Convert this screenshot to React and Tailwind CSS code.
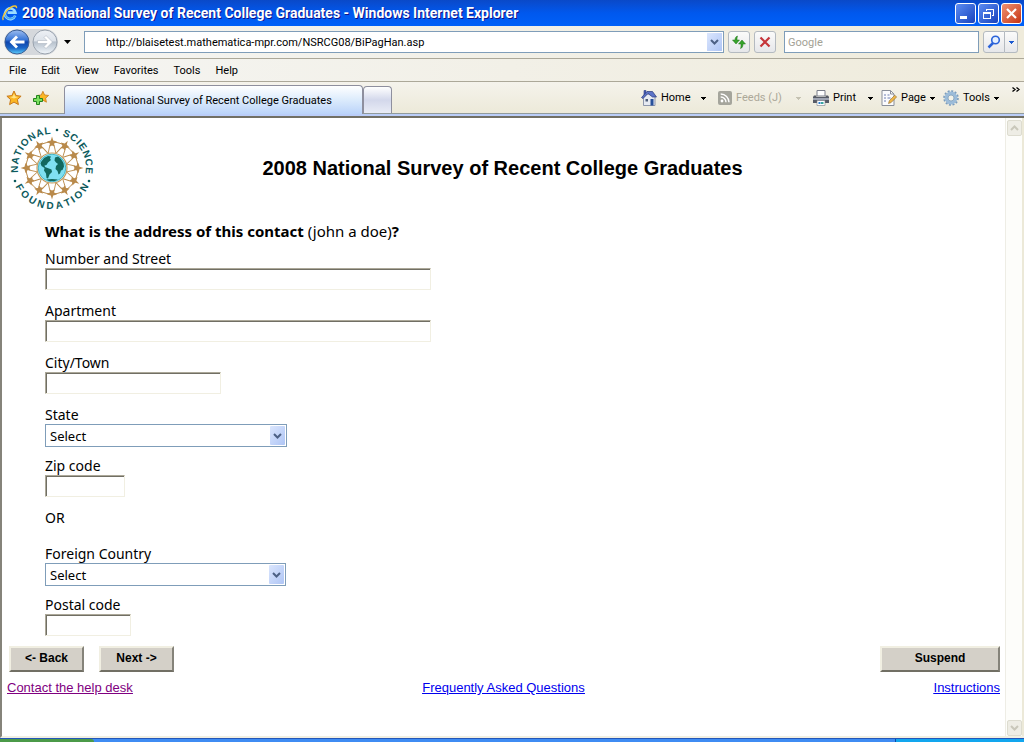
import React from 'react';

const PAGE_TITLE = '2008 National Survey of Recent College Graduates';
const MENU_ITEMS = ['File', 'Edit', 'View', 'Favorites', 'Tools', 'Help'];

const DropArrow = ({ className = 'fill-black' }) => (
    <svg className={`w-[5px] h-[3px] shrink-0 ${className}`} viewBox="0 0 5 3" shapeRendering="crispEdges">
        <path d="M0 0h5v1H4v1H3v1H2V2H1V1H0z" />
    </svg>
);

const Chevron = ({ className = 'stroke-[#4d6185]' }) => (
    <svg className={`w-[9px] h-[6px] ${className}`} viewBox="0 0 9 6" fill="none" strokeWidth="2">
        <path d="M1 1l3.5 3.5L8 1" />
    </svg>
);

const IeIcon = () => (
    <svg className="w-4 h-4 shrink-0" viewBox="0 0 16 16" fill="none">
        <path d="M13.2 10.6A5.3 5.3 0 1 1 13.4 7.6H5.6" stroke="#9bdcff" strokeWidth="2.6" />
        <path d="M13 10.8A5.2 5.2 0 0 1 3.2 9.6" stroke="#4aa9ee" strokeWidth="1.4" />
        <path d="M1.4 15C-.6 12.6 3.6 5.4 9 2.2c3.4-2 6-1.6 5.4 1" stroke="#f4c430" strokeWidth="1.4" />
    </svg>
);

const BackIcon = () => (
    <svg className="w-[26px] h-[26px]" viewBox="0 0 26 26">
        <defs>
            <linearGradient id="backOrb" x1="0" y1="0" x2="0" y2="1">
                <stop offset="0" stopColor="#9dbdf0" />
                <stop offset="0.4" stopColor="#3b78d8" />
                <stop offset="0.5" stopColor="#0f45ad" />
                <stop offset="0.75" stopColor="#1a66c8" />
                <stop offset="1" stopColor="#5fd0fb" />
            </linearGradient>
        </defs>
        <circle cx="13" cy="13" r="12" fill="url(#backOrb)" stroke="#3d5f95" />
        <path d="M5.500 13L12 6.500l2 2-3 3h9.500v3H11l3 3-2 2z" fill="#fff" />
    </svg>
);

const ForwardIcon = () => (
    <svg className="w-[26px] h-[26px]" viewBox="0 0 26 26">
        <defs>
            <linearGradient id="forwardOrb" x1="0" y1="0" x2="0" y2="1">
                <stop offset="0" stopColor="#eef1f5" />
                <stop offset="0.45" stopColor="#dde2e9" />
                <stop offset="0.5" stopColor="#b6c0cc" />
                <stop offset="1" stopColor="#f1f6fb" />
            </linearGradient>
        </defs>
        <circle cx="13" cy="13" r="12" fill="url(#forwardOrb)" stroke="#9aa3ae" />
        <path d="M20.500 13L14 6.500l-2 2 3 3H5.500v3H15l-3 3 2 2z" fill="#fff" stroke="#a5adb8" strokeWidth="0.500" />
    </svg>
);

const STAR = 'M8 1l2.100 4.600 5 .6-3.700 3.400 1 5L8 12.100 3.600 14.600l1-5L.9 6.200l5-.6z';

const FavoritesIcon = () => (
    <svg className="w-4 h-4" viewBox="0 0 16 16">
        <path d={STAR} fill="#fbb724" stroke="#c8791b" />
        <path d="M8 3.500l1.200 3 3 .5L8 8.500 4 7l2.800-.5z" fill="#ffe48a" />
    </svg>
);

const AddFavoriteIcon = () => (
    <svg className="w-4 h-4" viewBox="0 0 16 16">
        <g transform="translate(3.500 .5) scale(.8)">
            <path d={STAR} fill="#fbb724" stroke="#c8791b" />
        </g>
        <path d="M3.500 5.500h3v3h3v3h-3v3h-3v-3h-3v-3h3z" fill="#7be05e" stroke="#23831c" />
    </svg>
);

const RefreshIcon = () => (
    <svg className="w-[14px] h-[14px]" viewBox="0 0 14 14">
        <path d="M5.500 1C3.800 1.500 3 3 3 5H.5L4 9l3.500-4H5c0-1.500 0-2.500.5-4z" fill="#35a32a" stroke="#20751b" strokeWidth="0.500" />
        <path d="M8.500 13.500c1.700-.5 2.500-2 2.500-4.500h2.500L10 5 6.500 9H9c0 2 0 3-.5 4.500z" fill="#35a32a" stroke="#20751b" strokeWidth="0.500" />
    </svg>
);

const StopIcon = () => (
    <svg className="w-3 h-3" viewBox="0 0 12 12" fill="none">
        <path d="M1.500 1.500l9 9M10.500 1.500l-9 9" stroke="#c6353a" strokeWidth="2.200" />
    </svg>
);

const SearchIcon = () => (
    <svg className="w-[14px] h-[14px]" viewBox="0 0 14 14" fill="none">
        <path d="M6 8L1.500 12.500" stroke="#2b63d9" strokeWidth="2.500" />
        <circle cx="8.500" cy="5" r="3.800" fill="#e6f1ff" stroke="#2b63d9" strokeWidth="1.600" />
    </svg>
);

const HomeIcon = () => (
    <svg className="w-4 h-4" viewBox="0 0 16 16">
        <path d="M3 .5h2V4L3 6z" fill="#4c63b5" stroke="#2c3b80" strokeWidth="0.600" />
        <path d="M2.500 7.500L6 4h6l2 3.500v8H2.500z" fill="#e6eaf2" stroke="#76829c" strokeWidth="0.800" />
        <path d="M.5 7.500L6 1.500h5.500l4 5.500h-4L7 3.500 2 8.500z" fill="#5d74c8" stroke="#263779" strokeWidth="0.700" />
        <path d="M9.500 9h3v6.500h-3z" fill="#28519b" />
        <path d="M4.500 9H7v2.500H4.500z" fill="#4c5c78" />
    </svg>
);

const FeedIcon = () => (
    <svg className="w-[14px] h-[14px]" viewBox="0 0 14 14" fill="none">
        <rect width="14" height="14" rx="2" fill="#a5a59c" />
        <circle cx="4" cy="10" r="1.400" fill="#fff" />
        <path d="M2.700 6a5.300 5.300 0 0 1 5.300 5.300M2.700 3a8.300 8.300 0 0 1 8.300 8.300" stroke="#fff" strokeWidth="1.400" />
    </svg>
);

const PrintIcon = () => (
    <svg className="w-4 h-4" viewBox="0 0 16 16">
        <path d="M4 .5h8V6H4z" fill="#fff" stroke="#7b7f8a" />
        <path d="M1 5.500h2.500V7h9V5.500H15l1 1.500v6H0V7z" fill="#565b66" />
        <path d="M0 8h16v2H0z" fill="#9fa5b3" />
        <path d="M4 10.500h8v5H4z" fill="#fff" stroke="#7b7f8a" strokeWidth="0.600" />
        <path d="M5.500 12h2v2h-2z" fill="#2b7fd0" />
        <path d="M8 12h2.500v2H8z" fill="#3aa6a0" />
    </svg>
);

const PageIcon = () => (
    <svg className="w-4 h-4" viewBox="0 0 16 16">
        <path d="M1 .5h8.500L13 4v11.500H1z" fill="#fbfbfd" stroke="#8a8f9a" />
        <path d="M9.500.5V4H13" fill="none" stroke="#8a8f9a" />
        <path d="M3 5h2M6.500 5h2M3 8h2M6.500 8h3M3 11h2" stroke="#6f7fb2" />
        <path d="M7.500 13.500l.8-2.800 5.500-5.500 1.800 1.800-5.500 5.600z" fill="#eeb548" stroke="#8c6a2c" strokeWidth="0.600" />
    </svg>
);

const GearIcon = () => (
    <svg className="w-4 h-4" viewBox="0 0 16 16" fill="none">
        <circle cx="8" cy="8" r="6.800" stroke="#7c9dbd" strokeWidth="2" strokeDasharray="2 1.560" />
        <circle cx="8" cy="8" r="4.700" stroke="#9cbcd9" strokeWidth="3.400" />
        <circle cx="8" cy="8" r="3" fill="#f3f2e8" stroke="#7c9dbd" strokeWidth="0.800" />
    </svg>
);

const COMMANDS = [
    { label: 'Home', icon: HomeIcon, width: 'w-[77px] pr-3' },
    { label: 'Feeds (J)', icon: FeedIcon, width: 'w-[95px] pr-3', disabled: true },
    { label: 'Print', icon: PrintIcon, width: 'w-[68px] pr-2' },
    { label: 'Page', icon: PageIcon, width: 'w-[62px] pr-2' },
    { label: 'Tools', icon: GearIcon, width: 'w-[64px] pr-2' },
];

// Half widths of the seal's letters, as a share of the font size
const HALF_WIDTHS = { I: 0.14, L: 0.305, T: 0.305, F: 0.305, E: 0.333, S: 0.333, O: 0.389 };
const halfWidth = (letter) => HALF_WIDTHS[letter] || 0.361;

// Word set round the seal: angles are clockwise from the top, in degrees
const RingWord = ({ word, from, to, radius }) => {
    const size = 10;
    const centres = [0];
    for (let i = 1; i < word.length; i++) {
        centres.push(centres[i - 1] + halfWidth(word[i - 1]) + halfWidth(word[i]) + 0.15);
    }
    const total = centres[word.length - 1];
    const turn = to < from ? 180 : 0;
    const glyphs = [...word].map((letter, i) => {
        const angle = from + ((to - from) * centres[i]) / total;
        const rad = (angle * Math.PI) / 180;
        const tilt = ((angle + turn) * Math.PI) / 180;
        const half = halfWidth(letter) * size;
        return {
            x: (radius * Math.sin(rad) - half * Math.cos(tilt)).toFixed(1),
            y: (-radius * Math.cos(rad) - half * Math.sin(tilt)).toFixed(1),
            rotate: (angle + turn).toFixed(1),
        };
    });

    return (
        <text
            fontSize={size}
            x={glyphs.map((g) => g.x).join(' ')}
            y={glyphs.map((g) => g.y).join(' ')}
            rotate={glyphs.map((g) => g.rotate).join(' ')}
        >
            {word}
        </text>
    );
};

const FIGURE_ANGLES = [0, 30, 60, 90, 120, 150, 180, 210, 240, 270, 300, 330];

const NsfLogo = () => (
    <svg className="w-[86px] h-[86px] shrink-0" viewBox="-43 -43 86 86" role="img" aria-label="National Science Foundation">
        <circle r="26" fill="none" stroke="#b98a4b" strokeWidth="1" />
        {FIGURE_ANGLES.map((angle) => (
            <g key={angle} transform={`rotate(${angle})`} fill="#b98a4b">
                <path d="M0 -31.500L1.200 -27.500 5 -26.500 2.200 -24.500 2.300 -21.500 0 -22.500-2.300 -21.500-2.200 -24.500-5 -26.500-1.200 -27.500z" />
                <path d="M-2 -23L-3.800 -15M2 -23L3.800 -15" fill="none" stroke="#b98a4b" strokeWidth="0.900" />
            </g>
        ))}
        <circle r="15" fill="#fff" stroke="#c39a5c" strokeWidth="1.200" />
        <circle r="13.800" fill="#7fe0f2" stroke="#2aa5b8" strokeWidth="0.800" />
        <path
            d="M-11 -6l3-4 4-2 3 .5-1 2 1 1.500-3 2.500-1.500 2.500-2 .5.500 1.500 2.500 1 4 1.500.5 2.500-2.500 2.500-1.500 4-1.500-.500-.500-4.500-2-3 .5-2.500-3-2-1-2.500zM3 -10.500l3-1 3 2.500 2.500 4 .5 3.500-1.500 3.500-1.500.500-1 3-1.500 1-1-3.500-2-2 .5-3 2-2-2-1.500-1.500-2zM-6 11.500l6-.5 6 .5-3 1.500h-6z"
            fill="#12685f"
        />
        <g className="font-['Liberation_Sans',sans-serif] font-bold" fill="#0c5a5c">
            <RingWord word="NATIONAL" from={-92} to={-7} radius={34} />
            <RingWord word="SCIENCE" from={23} to={94} radius={34} />
            <RingWord word="FOUNDATION" from={239} to={121} radius={41} />
        </g>
        <g fill="#0c5a5c">
            <circle cx="5" cy="-38" r="1.300" />
            <circle cx="-37" cy="13" r="1.300" />
            <circle cx="37" cy="13" r="1.300" />
        </g>
    </svg>
);

const WINDOW_BUTTON = 'w-[21px] h-[21px] rounded-[3px] border border-white flex items-center justify-center';

const TitleBar = () => (
    <header className="h-[26px] pl-[2px] pr-[2px] flex items-center gap-1 bg-gradient-to-b from-[#0a49c8] via-[#0058ee] to-[#0060f8]">
        <IeIcon />
        <h1 className="flex-1 truncate font-bold text-[14px] leading-4 text-white [text-shadow:1px_1px_#0f1089]">
            {PAGE_TITLE} - Windows Internet Explorer
        </h1>
        <div className="flex gap-[2px]">
            <button aria-label="Minimize" className={`${WINDOW_BUTTON} bg-gradient-to-br from-[#5d8cf2] to-[#1941bd]`}>
                <svg className="w-[13px] h-[13px]" viewBox="0 0 13 13"><path d="M1 9h7v3H1z" fill="#fff" /></svg>
            </button>
            <button aria-label="Restore" className={`${WINDOW_BUTTON} bg-gradient-to-br from-[#5d8cf2] to-[#1941bd]`}>
                <svg className="w-[13px] h-[13px]" viewBox="0 0 13 13" fill="none" stroke="#fff" shapeRendering="crispEdges">
                    <path d="M4.500 4V2.500h7v6H10M4 2h8M1.500 5.500h7v6h-7zM1 6.500h8" />
                </svg>
            </button>
            <button aria-label="Close" className={`${WINDOW_BUTTON} bg-gradient-to-br from-[#f0906f] to-[#c5300c]`}>
                <svg className="w-[13px] h-[13px]" viewBox="0 0 13 13" fill="none"><path d="M2 2l9 9M11 2l-9 9" stroke="#fff" strokeWidth="2.200" /></svg>
            </button>
        </div>
    </header>
);

const TOOL_BUTTON = 'h-[22px] border border-[#b4bac0] rounded-[3px] bg-gradient-to-b from-[#fbfbfa] to-[#e6e7ea] flex items-center justify-center';

const AddressBar = () => (
    <div className="h-[33px] pl-1 pr-[6px] flex items-center border-b border-[#aca899] bg-gradient-to-r from-[#f5f5f3] to-[#efebdb]">
        <div className="flex items-center rounded-full bg-[#d5d8dc] gap-[2px]">
            <button aria-label="Back"><BackIcon /></button>
            <button aria-label="Forward"><ForwardIcon /></button>
        </div>
        <button aria-label="Recent pages" className="ml-[2px] w-[14px] flex justify-center">
            <svg className="w-[7px] h-1" viewBox="0 0 7 4"><path d="M0 0h7L3.500 4z" /></svg>
        </button>
        <div className="ml-[10px] flex-1 h-[22px] flex items-center border border-[#7f9db9] bg-white pr-px">
            <input
                aria-label="Address"
                defaultValue="http://blaisetest.mathematica-mpr.com/NSRCG08/BiPagHan.asp"
                className="flex-1 min-w-0 pl-[21px] pt-[2px] bg-transparent outline-none leading-4"
            />
            <button aria-label="Show address list" className="w-[15px] h-[18px] flex items-center justify-center bg-gradient-to-br from-[#dbe6fd] to-[#afc5f5]">
                <Chevron />
            </button>
        </div>
        <button aria-label="Refresh" className={`${TOOL_BUTTON} w-[22px] ml-1`}><RefreshIcon /></button>
        <button aria-label="Stop" className={`${TOOL_BUTTON} w-[22px] ml-1`}><StopIcon /></button>
        <input
            aria-label="Search"
            placeholder="Google"
            className="ml-2 w-[195px] h-[22px] px-[3px] border border-[#7f9db9] bg-white outline-none placeholder:text-[#a3a195]"
        />
        <div className="ml-1 flex">
            <button aria-label="Run search" className={`${TOOL_BUTTON} w-[22px] rounded-r-none`}><SearchIcon /></button>
            <button aria-label="Search options" className={`${TOOL_BUTTON} w-[13px] rounded-l-none border-l-0`}>
                <DropArrow className="fill-[#1c5ad0]" />
            </button>
        </div>
    </div>
);

const MenuBar = () => (
    <nav className="h-[23px] pl-[9px] pt-[2px] flex items-center gap-[15px] border-b border-[#aca899] bg-gradient-to-r from-[#f5f5f3] to-[#efebdb]">
        {MENU_ITEMS.map((item) => (
            <button key={item} className="leading-4">{item}</button>
        ))}
    </nav>
);

const CommandBar = () => (
    <div className="h-[36px] flex flex-col bg-gradient-to-b from-[#f5f3ec] to-[#ebe8d6]">
        <div className="h-8 flex items-end border-b border-[#919b9c]">
            <div className="h-full pl-[6px] w-[64px] flex items-center gap-[11px]">
                <button aria-label="Favorites Center"><FavoritesIcon /></button>
                <button aria-label="Add to Favorites"><AddFavoriteIcon /></button>
            </div>
            <button className="h-[29px] -mb-px w-[299px] pl-[21px] pt-[2px] text-left whitespace-nowrap border border-b-0 border-[#8e8f9e] rounded-t-[4px] bg-gradient-to-b from-white via-[#dcebfc] to-[#bad3f9]">
                {PAGE_TITLE}
            </button>
            <button aria-label="New tab" className="h-[27px] w-[29px] border border-b-0 border-[#8e8f9e] rounded-t-[4px] bg-gradient-to-b from-white via-[#d3d8eb] to-[#e9ecf6]" />
            <div className="flex-1 h-full flex items-center justify-end pt-px">
                {COMMANDS.map(({ label, icon: Icon, width, disabled }) => (
                    <button
                        key={label}
                        disabled={disabled}
                        className={`${width} flex items-center gap-1 whitespace-nowrap disabled:text-[#aca899]`}
                    >
                        <Icon />
                        <span className="flex-1 text-left">{label}</span>
                        <DropArrow className={disabled ? 'fill-[#c5c2b2]' : 'fill-black'} />
                    </button>
                ))}
                <button aria-label="More commands" className="self-start pt-1 w-[17px] flex justify-center">
                    <svg className="w-2 h-[5px]" viewBox="0 0 8 5" fill="none" stroke="#000" strokeWidth="1.300">
                        <path d="M.5 .5l2.500 2-2.500 2M4.500 .5l2.500 2-2.500 2" />
                    </svg>
                </button>
            </div>
        </div>
        <div className="flex-1 bg-[#bacdf8] border-b-2 border-[#716f64]" />
    </div>
);

const SCROLL_BUTTON = 'w-[15px] h-4 flex items-center justify-center rounded-[2px] border border-[#dddcd0] bg-[#eeede5]';

const Scrollbar = () => (
    <div className="w-[17px] shrink-0 flex flex-col items-center justify-between pt-[2px] bg-[#fdfdfa] border-l border-[#eeede5]">
        <button disabled aria-label="Scroll up" className={SCROLL_BUTTON}>
            <Chevron className="rotate-180 stroke-[#c9c7ba]" />
        </button>
        <button disabled aria-label="Scroll down" className={SCROLL_BUTTON}>
            <Chevron className="stroke-[#c9c7ba]" />
        </button>
    </div>
);

const LABEL = 'block pt-[2px] leading-[18px]';

const TextField = ({ id, label, width }) => (
    <div className="mb-[10px]">
        <label htmlFor={id} className={LABEL}>{label}</label>
        <input
            id={id}
            type="text"
            className={`${width} block max-w-full h-[22px] px-1 bg-white outline-none border border-t-[#aca899] border-l-[#aca899] border-r-[#f1efe2] border-b-[#f1efe2] shadow-[inset_1px_1px_0_#716f64]`}
        />
    </div>
);

const SelectField = ({ id, label, width }) => (
    <div className="mb-2">
        <label htmlFor={id} className={LABEL}>{label}</label>
        <div className={`${width} relative h-[23px]`}>
            <select id={id} className="w-full h-full pl-1 appearance-none bg-white outline-none border border-[#7f9db9] text-[13px] leading-5">
                <option>Select</option>
            </select>
            <span className="absolute right-[2px] inset-y-[2px] w-[15px] flex items-center justify-center pointer-events-none rounded-[1px] bg-gradient-to-br from-[#dbe6fd] to-[#afc5f5]">
                <Chevron />
            </span>
        </div>
    </div>
);

const FORM_BUTTON = "h-[26px] pb-[2px] font-['Liberation_Sans',sans-serif] font-bold text-[12px] leading-4 bg-[#d4d0c8] border-2 border-t-[#f1efe2] border-l-[#f1efe2] border-r-[#85837a] border-b-[#716f64]";

const SurveyPage = () => (
    <main className="flex-1 min-w-0 bg-white pl-[5px] pr-[5px]">
        <div className="grid grid-cols-[88px_1fr_92px] items-center pt-[7px] pl-[2px]">
            <NsfLogo />
            <h2 className="text-center font-['Liberation_Sans',sans-serif] font-bold text-[20px] leading-6">{PAGE_TITLE}</h2>
        </div>
        <form onSubmit={(e) => e.preventDefault()}>
            <div className="pl-[38px] pt-[10px] font-['Noto_Sans',sans-serif] text-[14px]">
                <p className="leading-5 mb-[7px] text-[15px]">
                    <b>What is the address of this contact</b> (john a doe)<b>?</b>
                </p>
                <TextField id="street" label="Number and Street" width="w-[386px]" />
                <TextField id="apartment" label="Apartment" width="w-[386px]" />
                <TextField id="city" label="City/Town" width="w-[176px]" />
                <SelectField id="state" label="State" width="w-[242px]" />
                <TextField id="zip" label="Zip code" width="w-[80px]" />
                <p className={`${LABEL} mb-4`}>OR</p>
                <SelectField id="country" label="Foreign Country" width="w-[241px]" />
                <TextField id="postal" label="Postal code" width="w-[86px]" />
            </div>
            <div className="flex pl-[2px] gap-[15px]">
                <button type="button" className={`${FORM_BUTTON} w-[75px]`}>&lt;- Back</button>
                <button type="submit" className={`${FORM_BUTTON} w-[75px]`}>Next -&gt;</button>
                <button type="button" className={`${FORM_BUTTON} w-[120px] ml-auto`}>Suspend</button>
            </div>
        </form>
        <div className="grid grid-cols-3 pt-2 font-['Liberation_Sans',sans-serif] text-[13px] leading-4 underline text-[#0000ee]">
            <a href="#help" className="justify-self-start text-[#800080]">Contact the help desk</a>
            <a href="#faq" className="justify-self-center">Frequently Asked Questions</a>
            <a href="#instructions" className="justify-self-end">Instructions</a>
        </div>
    </main>
);

const Taskbar = () => (
    <footer className="h-1 flex bg-[#3f8cf3] border-t border-[#2456b8]">
        <div className="w-[94px] bg-[#4b9a48] rounded-tr-[3px]" />
        <div className="flex-1" />
        <div className="w-[129px] bg-[#12a6ee] border-l border-[#0a4aa8]" />
    </footer>
);

export default function App() {
    return (
        <div className="min-h-screen flex flex-col bg-[#ece9d8] font-['Roboto','Noto_Sans',sans-serif] text-[11px] text-black">
            <TitleBar />
            <AddressBar />
            <MenuBar />
            <CommandBar />
            <div className="flex-1 flex border-l-2 border-[#85837a] border-b-2 border-b-[#f1efe2] pr-[2px]">
                <SurveyPage />
                <Scrollbar />
            </div>
            <Taskbar />
        </div>
    );
}
